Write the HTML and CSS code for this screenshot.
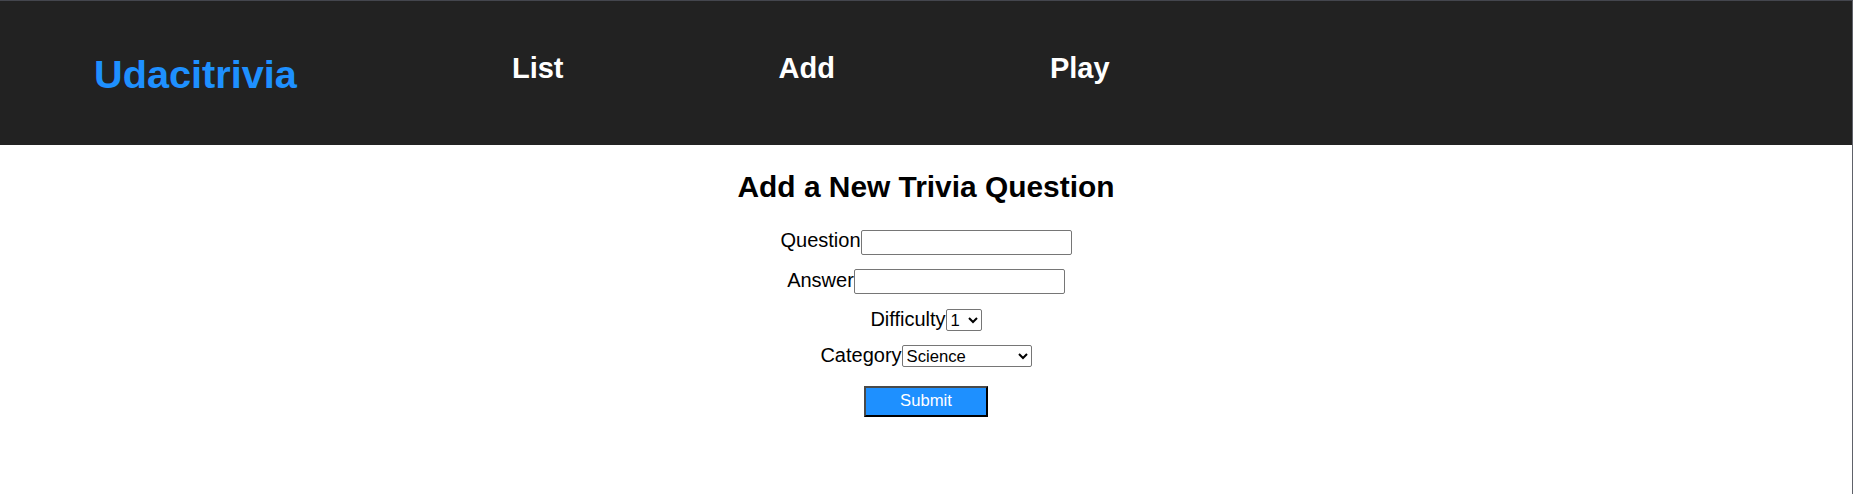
FILE: index.html
```html
<!DOCTYPE html>
<html lang="en">
<head>
<meta charset="utf-8">
<title>Udacitrivia</title>
<link rel="stylesheet" href="styles.css">
</head>
<body>
<div class="app">
  <header class="app-header">
    <h1 class="brand">Udacitrivia</h1>
    <h2 class="nav-item">List</h2>
    <h2 class="nav-item">Add</h2>
    <h2 class="nav-item">Play</h2>
  </header>
  <main class="add-form">
    <h2 class="title">Add a New Trivia Question</h2>
    <form class="form">
      <label class="row">Question<input class="text-input" type="text" name="question"></label>
      <label class="row">Answer<input class="text-input" type="text" name="answer"></label>
      <label class="row">Difficulty<select class="select select-small" name="difficulty">
          <option>1</option><option>2</option><option>3</option><option>4</option><option>5</option>
        </select></label>
      <label class="row">Category<select class="select select-wide" name="category">
          <option>Science</option><option>Art</option><option>Geography</option><option>History</option><option>Entertainment</option><option>Sports</option>
        </select></label>
      <input class="submit" type="submit" value="Submit">
    </form>
  </main>
</div>
</body>
</html>
```

FILE: styles.css
```css
html, body {
  margin: 0;
  padding: 0;
  background: #ffffff;
}

body {
  font-family: "Liberation Sans", Arial, sans-serif;
}

.app {
  box-sizing: border-box;
  min-height: 494px;
  border-top: 1px solid #44464e;
  border-right: 1px solid #60626a;
}

.app-header {
  background-color: #222222;
  height: 96px;
  padding: 24px 0 24px 94px;
  display: flex;
  align-items: flex-start;
  gap: 215px;
  color: #ffffff;
}

.brand {
  flex: 0 0 auto;
  margin: 27.3px 0 0 0;
  font-size: 39.7px;
  line-height: 1.15;
  font-weight: bold;
  color: #1e90ff;
}

.nav-item {
  flex: 0 0 auto;
  margin: 27px 0 0 0;
  font-size: 29px;
  line-height: 1.15;
  font-weight: bold;
  color: #ffffff;
}

.add-form {
  text-align: center;
}

.title {
  margin: 25.3px 0 24.7px 0;
  font-size: 29.9px;
  line-height: 1.15;
  font-weight: bold;
  color: #000000;
}

.form {
  display: flex;
  flex-direction: column;
  align-items: center;
  font-size: 20px;
  line-height: 23px;
  color: #000000;
}

.row {
  display: block;
  margin-bottom: 14px;
}

.row:nth-child(2) {
  margin-bottom: 13.3px;
}

.row:nth-child(3) {
  margin-bottom: 13px;
}

.row:nth-child(4) {
  margin-bottom: 19.3px;
}

.text-input {
  box-sizing: border-box;
  width: 211px;
  height: 25px;
  margin: 0;
  padding: 1px 2px;
  border: 1px solid #767676;
  border-radius: 2px;
  font-family: "Liberation Sans", Arial, sans-serif;
  font-size: 16.67px;
  vertical-align: baseline;
  background: #ffffff;
}

.select {
  box-sizing: border-box;
  height: 22px;
  margin: 0;
  border: 1px solid #767676;
  border-radius: 2px;
  background: #ffffff;
  color: #000000;
  font-family: "Liberation Sans", Arial, sans-serif;
  font-size: 16.67px;
  vertical-align: baseline;
}

.select-small {
  width: 36px;
}

.select-wide {
  width: 130px;
}

.submit {
  display: block;
  box-sizing: border-box;
  width: 124.4px;
  height: 30.7px;
  margin: 0;
  padding: 0;
  background-color: #1e90ff;
  color: #ffffff;
  border-style: solid;
  border-width: 2px;
  border-color: #4a4a4a #000000 #000000 #4a4a4a;
  font-family: "Liberation Sans", Arial, sans-serif;
  font-size: 16.67px;
}
```
